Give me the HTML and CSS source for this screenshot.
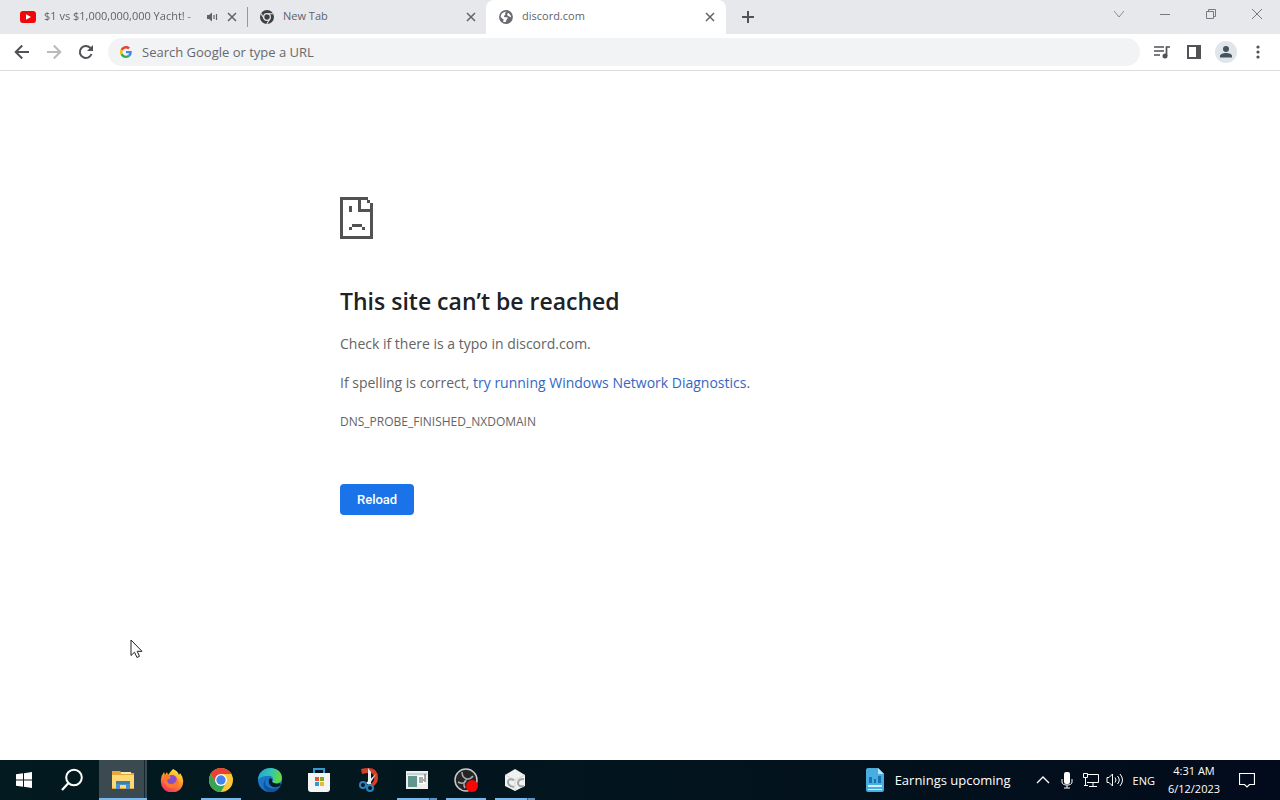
FILE: index.html
```html
<!DOCTYPE html>
<html lang="en">
<head>
<meta charset="utf-8">
<title>discord.com</title>
<link rel="stylesheet" href="styles.css">
</head>
<body>
<header class="browser">
  <div class="tabstrip">
    <div class="tab tab-first">
      <svg class="favicon" viewBox="0 0 16 16"><rect y="2" width="16" height="12" rx="3" fill="#f00808"/><path d="M6 5.2v5.6L11 8z" fill="#fff"/></svg>
      <span class="tab-title tab-title-faded">$1 vs $1,000,000,000 Yacht! -</span>
      <button class="icon-button" aria-label="Mute tab"><svg width="12" height="12" viewBox="0 0 12 12"><path d="M0 4h2L5 1.500v9L2 8H0z" fill="#5f6368"/><path d="M7 4v4M9.500 3v6" stroke="#5f6368" stroke-width="1.200"/></svg></button>
      <button class="icon-button close" aria-label="Close tab"><svg width="10" height="10" viewBox="0 0 10 10"><path d="M1 1l8 8M9 1L1 9" stroke="#5f6368" stroke-width="1.500"/></svg></button>
    </div>
    <div class="tab tab-second">
      <svg class="favicon favicon-small" viewBox="0 0 16 16"><circle cx="8" cy="8" r="8" fill="#3c4043"/><circle cx="8" cy="8" r="3.800" fill="#3c4043" stroke="#e7e8ec" stroke-width="1.400"/><path d="M8 4.200h7M4.700 9.900L1.200 3.900M11.300 9.900L7.800 16" stroke="#e7e8ec" stroke-width="1.200"/></svg>
      <span class="tab-title">New Tab</span>
      <button class="icon-button close" aria-label="Close tab"><svg width="10" height="10" viewBox="0 0 10 10"><path d="M1 1l8 8M9 1L1 9" stroke="#5f6368" stroke-width="1.500"/></svg></button>
    </div>
    <div class="tab tab-active">
      <svg class="favicon favicon-small" viewBox="0 0 16 16"><circle cx="8" cy="8" r="7.900" fill="#6a6b70"/><path d="M8.800 2Q6.500 3 7 4.500Q8 5.700 6.200 6.300Q5 7.200 6.500 8.300H9.700Q10.500 9.800 9 10.200L7.700 13.800Q5.500 14 4.300 13.100L5.600 11.400L1.900 8Q2 3 7.300 1.900zM10.200 3.200L12 4.500Q13.700 6 14 8.700L12 7.500L10.800 7.200L9.200 5.500z" fill="#fff"/></svg>
      <span class="tab-title">discord.com</span>
      <button class="icon-button close" aria-label="Close tab"><svg width="10" height="10" viewBox="0 0 10 10"><path d="M1 1l8 8M9 1L1 9" stroke="#5f6368" stroke-width="1.500"/></svg></button>
    </div>
    <button class="icon-button new-tab" aria-label="New tab"><svg width="14" height="14" viewBox="0 0 14 14"><path d="M7 1v12M1 7h12" stroke="#505358" stroke-width="2"/></svg></button>
    <div class="window-controls">
      <button class="icon-button" aria-label="Search tabs"><svg width="12" height="12" viewBox="0 0 12 12"><path d="M1 3l5 6 5-6" fill="none" stroke="#8b8d94"/></svg></button>
      <button class="icon-button" aria-label="Minimize"><svg width="12" height="12" viewBox="0 0 12 12"><path d="M1 6.500h10" stroke="#777980"/></svg></button>
      <button class="icon-button" aria-label="Restore"><svg width="12" height="12" viewBox="0 0 12 12"><path d="M1.500 3.500h7v7h-7zM3.500 3.500v-2h7v7h-2" fill="none" stroke="#777980"/></svg></button>
      <button class="icon-button" aria-label="Close window"><svg width="12" height="12" viewBox="0 0 12 12"><path d="M1 1l10 10M11 1L1 11" stroke="#777980"/></svg></button>
    </div>
  </div>
  <div class="toolbar">
    <button class="icon-button nav-button" aria-label="Back"><svg width="16" height="16" viewBox="0 0 16 16"><path d="M15 8H2M8.200 1.500L1.700 8l6.500 6.500" fill="none" stroke="#505256" stroke-width="2"/></svg></button>
    <button class="icon-button nav-button" aria-label="Forward"><svg width="16" height="16" viewBox="0 0 16 16"><path d="M1 8h13M7.800 1.500L14.300 8l-6.500 6.500" fill="none" stroke="#b8babd" stroke-width="2"/></svg></button>
    <button class="icon-button nav-button" aria-label="Reload page"><svg width="16" height="16" viewBox="0 0 16 16"><path d="M13.500 10A6 6 0 1 1 12.200 3.800L14 5.600" fill="none" stroke="#505256" stroke-width="2"/><path d="M15 1v6H9z" fill="#505256"/></svg></button>
    <label class="omnibox">
      <svg width="12" height="12" viewBox="0 0 48 48"><path fill="#ea4335" d="M24 9.500c3.500 0 6.700 1.200 9.200 3.600l6.900-6.900C35.900 2.400 30.500 0 24 0 14.600 0 6.500 5.400 2.600 13.200l8 6.200C12.400 13.700 17.700 9.500 24 9.500z"/><path fill="#4285f4" d="M47 24.500c0-1.600-.2-3.100-.4-4.500H24v9h12.900c-.6 3-2.300 5.500-4.800 7.200l7.700 6C44.400 38 47 31.800 47 24.500z"/><path fill="#fbbc05" d="M10.500 28.600A15 15 0 0 1 10.500 19.400l-8-6.200a24 24 0 0 0 0 21.600z"/><path fill="#34a853" d="M24 48c6.500 0 11.900-2.100 15.900-5.800l-7.700-6c-2.200 1.500-4.900 2.300-8.200 2.300-6.300 0-11.600-4.200-13.500-9.900l-8 6.200C6.500 42.600 14.600 48 24 48z"/></svg>
      <input type="text" aria-label="Address and search bar" placeholder="Search Google or type a URL">
    </label>
    <div class="actions">
      <button class="icon-button" aria-label="Media controls"><svg width="18" height="16" viewBox="0 0 18 16"><path d="M1 3h10M1 7h10M1 11h6M13.500 12V3H17" fill="none" stroke="#505256" stroke-width="1.700"/><circle cx="12" cy="12" r="2.500" fill="#505256"/></svg></button>
      <button class="icon-button" aria-label="Side panel"><svg width="14" height="14" viewBox="0 0 14 14"><path d="M0 0h14v14H0zM2 2v10h7V2z" fill="#505256" fill-rule="evenodd"/></svg></button>
      <button class="icon-button" aria-label="Profile"><svg width="22" height="22" viewBox="0 0 22 22"><circle cx="11" cy="11" r="11" fill="#dfe5e9"/><circle cx="11" cy="8" r="3" fill="#455260"/><path d="M5 16.500v-1.500c0-2 3-3 6-3s6 1 6 3v1.500z" fill="#455260"/></svg></button>
      <button class="icon-button" aria-label="Browser menu"><svg width="4" height="14" viewBox="0 0 4 14"><g fill="#505256"><circle cx="2" cy="2" r="1.600"/><circle cx="2" cy="7" r="1.600"/><circle cx="2" cy="12" r="1.600"/></g></svg></button>
    </div>
  </div>
</header>

<main class="page">
  <section class="error">
    <svg class="sad-page" width="34" height="42" viewBox="0 0 34 42" shape-rendering="crispEdges"><path d="M0 0h28v3H3v36h27V15H18V0h3v12h9V6h3v36H0zM27 3h3v3h-3zM9 9h3v6H9zM12 27h10v3H12zM9 30h3v3H9zM22 30h3v3h-3z" fill="#525252"/></svg>
    <h1>This site can’t be reached</h1>
    <p>Check if there is a typo in discord.com.</p>
    <p>If spelling is correct, <a href="#diagnostics">try running Windows Network Diagnostics</a>.</p>
    <p class="error-code">DNS_PROBE_FINISHED_NXDOMAIN</p>
    <button class="reload">Reload</button>
  </section>
  <svg class="cursor" width="13" height="20" viewBox="0 0 13 20"><path d="M1 1v15.500l3.500-3.300L7 18.500l2.500-1.200-2.300-5H12z" fill="#fff" stroke="#222"/></svg>
</main>

<footer class="taskbar">
  <button class="task" aria-label="Start"><svg width="16" height="16" viewBox="0 0 16 16"><path d="M0 2.300L7 1.300V7.500H0zM8 1.200L16 0v7.500H8zM0 8.500h7v6.200l-7-1zM8 8.500h8V16l-8-1.200z" fill="#fff"/></svg></button>
  <button class="task" aria-label="Search"><svg width="24" height="24" viewBox="0 0 24 24"><circle cx="14" cy="9.500" r="7.800" fill="none" stroke="#fff" stroke-width="2"/><path d="M8.500 15L2 22" stroke="#fff" stroke-width="2.200"/></svg></button>
  <div class="apps">
    <button class="task task-current" aria-label="File Explorer"><svg width="24" height="24" viewBox="0 0 24 24"><path d="M1 3h8l2 2h12v16H1z" fill="#e5a83b"/><path d="M1 7h22v13H1z" fill="#ffda72"/><path d="M10 4h10v2H10z" fill="#f6e7b4"/><path d="M5 21v-8h14v8h-4v-4H9v4z" fill="#4593cc"/><path d="M5 13h14v3H5z" fill="#3e80ad"/></svg></button>
    <button class="task" aria-label="Firefox"><svg width="24" height="24" viewBox="0 0 24 24"><defs><linearGradient id="fox" x1=".8" y1="0" x2=".3" y2="1"><stop stop-color="#fff044"/><stop offset=".45" stop-color="#ff9a28"/><stop offset="1" stop-color="#f22c62"/></linearGradient></defs><path d="M13 1q5 2 6 6l1-2q4 5 3 10a11 10 0 0 1-22-1Q0 9 4 4l1 3 2-3 1 3q3-4 5-6z" fill="url(#fox)"/><circle cx="12" cy="12" r="5" fill="#8750c7"/><path d="M4 7q5-1 7 3l-4 2q0 4 4 4 5 0 6-6l2 5q-3 6-9 5-7-2-6-13z" fill="#ff762f"/></svg></button>
    <button class="task task-running" aria-label="Chrome"><svg width="24" height="24" viewBox="0 0 24 24"><circle cx="12" cy="12" r="12" fill="#fbc83c"/><path d="M1.600 6A12 12 0 0 1 22.400 6H12L6.800 15z" fill="#e64335"/><path d="M1.600 6L7 15h5.200L17 15l-5.200 9A12 12 0 0 1 1.600 6z" fill="#35a553"/><circle cx="12" cy="12" r="6" fill="#fff"/><circle cx="12" cy="12" r="4.700" fill="#4284ed"/></svg></button>
    <button class="task" aria-label="Edge"><svg width="24" height="24" viewBox="0 0 24 24"><defs><linearGradient id="edge" x1="0" y1="0" x2="1" y2=".3"><stop stop-color="#239cdb"/><stop offset=".55" stop-color="#32c4b4"/><stop offset="1" stop-color="#62d747"/></linearGradient></defs><circle cx="12" cy="12" r="12" fill="#1877c8"/><path d="M0 12C1-4 24-3 24 10c0 5-6 7-10 4 3-3 0-7-5-6C5 8 1 10 0 12z" fill="url(#edge)"/><path d="M9 9q-5 8 3 11 5 2 10-1-4 6-11 5Q1 19 9 9z" fill="#13529b"/><path d="M14 14q4 3 8 1l1 2q-5 4-10 1-4-4-1-8 3 1 2 4z" fill="#061e28"/></svg></button>
    <button class="task" aria-label="Microsoft Store"><svg width="24" height="24" viewBox="0 0 24 24"><path d="M7 7V1h10v6" fill="none" stroke="#3799d4" stroke-width="2"/><path d="M1 5h22v16q0 3-3 3H4q-3 0-3-3z" fill="#f3f4f4"/><path d="M8 9h4v4H8z" fill="#e8572e"/><path d="M13 9h4v4h-4z" fill="#77ad29"/><path d="M8 14h4v4H8z" fill="#299dd5"/><path d="M13 14h4v4h-4z" fill="#f4b62d"/></svg></button>
    <button class="task" aria-label="Snipping Tool"><svg width="24" height="24" viewBox="0 0 24 24"><path d="M5 1q17-4 17 9 0 6-6 9l-2-3q5-2 4-7-1-5-7-4l-5 1z" fill="#d43f25"/><path d="M12 0l3 4v12h-3zM20 6l-7 11-3-2z" fill="#e8edf0"/><g fill="none" stroke="#2d83bd" stroke-width="2"><circle cx="7" cy="17" r="3"/><circle cx="14" cy="20" r="3"/></g></svg></button>
    <button class="task task-stacked" aria-label="Recorder"><svg width="24" height="24" viewBox="0 0 24 24"><path d="M1 3h22v18H1z" fill="#eee"/><path d="M2 5h20v2H2z" fill="#c5d2d3"/><path d="M3 8h9v11H3z" fill="#629790"/><path d="M13 8h7v8h-7z" fill="#fff"/><path d="M14 10h4M14 12h5M14 14h4M20 6v8" stroke="#53595a"/></svg></button>
    <button class="task task-running" aria-label="OBS Studio"><svg width="24" height="24" viewBox="0 0 24 24"><circle cx="12" cy="12" r="11" fill="#252527" stroke="#c8c9ca" stroke-width="1.500"/><path d="M8 4q0 6 5 7 4 0 6-3M13 11q-5 4-2 9M4 14q5 3 8-1" fill="none" stroke="#a9aaab" stroke-width="1.500"/><circle cx="18" cy="18" r="6" fill="#f90706"/></svg></button>
    <button class="task task-stacked" aria-label="Cube app"><svg width="24" height="24" viewBox="0 0 24 24"><path d="M12 1l10 6v11l-10 5-10-5V7z" fill="#f0f1f1"/><path d="M2 7l10 5 10-5M12 12v11" fill="none" stroke="#d4d6d7"/><path d="M11 12q-6-2-6 2t6 5M21 11q-6 0-6 4t6 3" fill="none" stroke="#a4a7a9" stroke-width="2"/></svg></button>
  </div>
  <button class="news"><svg width="20" height="24" viewBox="0 0 20 24"><path d="M1 2q0-2 2-2h10l6 6v16q0 2-2 2H3q-2 0-2-2z" fill="#48addf"/><path d="M13 0l6 6h-6z" fill="#b5e7fb"/><path d="M4 9h3v6H4zM9 11h2v4H9zM13 8h3v7h-3z" fill="#1973b2"/><path d="M3 17h14v2H3zM3 21h14v1H3z" fill="#caf1ff"/></svg><span>Earnings upcoming</span></button>
  <div class="tray">
    <button class="icon-button" aria-label="Show hidden icons"><svg width="14" height="10" viewBox="0 0 14 10"><path d="M1 8l6-6 6 6" fill="none" stroke="#fff" stroke-width="1.400"/></svg></button>
    <button class="icon-button" aria-label="Microphone"><svg width="12" height="18" viewBox="0 0 12 18"><rect x="3" y="1" width="6" height="12" rx="2" fill="#fff"/><path d="M1 8v3q0 3 5 3t5-3V8M6 14v3M3 17h6" fill="none" stroke="#fff"/></svg></button>
    <button class="icon-button" aria-label="Network"><svg width="16" height="14" viewBox="0 0 16 14"><path d="M5 1.500h10.500v8H4M.5.500h4v4h-4zM2.500 4v8.500M1 12.500h4M10 10v3M6 13.500h8" fill="none" stroke="#fff"/></svg></button>
    <button class="icon-button" aria-label="Volume"><svg width="18" height="14" viewBox="0 0 18 14"><path d="M1 4.500h2L6.500 1v12L3 9.500H1zM9 4.500q2 2.500 0 5M11.500 3q3.500 4 0 8M14 1q5 6 0 12" fill="none" stroke="#fff"/></svg></button>
    <button class="language">ENG</button>
    <button class="clock"><span>4:31 AM</span><span>6/12/2023</span></button>
    <button class="icon-button notifications" aria-label="Notifications"><svg width="16" height="16" viewBox="0 0 16 16"><path d="M.5 1.500h15v11h-5L8 15l-2.500-2.500h-5z" fill="none" stroke="#fff" stroke-width="1.200"/></svg></button>
  </div>
</footer>
</body>
</html>
```

FILE: styles.css
```css
* { box-sizing: border-box; }

body {
  margin: 0;
  min-height: 100vh;
  display: flex;
  flex-direction: column;
  background: #fff;
  font-family: "Open Sans", "Noto Sans", sans-serif;
}

svg { display: block; flex: none; }

button {
  margin: 0;
  padding: 0;
  border: 0;
  background: none;
  color: inherit;
  font: inherit;
}

.icon-button {
  display: grid;
  place-items: center;
  flex: none;
}

/* Tab strip */
.tabstrip {
  display: flex;
  height: 34px;
  background: #e7e8ec;
}

.tab {
  display: flex;
  align-items: center;
  gap: 8px;
  flex: 0 1 240px;
  min-width: 0;
  color: #5f6368;
  font-size: 11px;
}

.tab-first {
  flex-basis: 248px;
  padding: 0 10px 0 20px;
  border-right: 1px solid transparent;
  border-image: linear-gradient(transparent 8px, #96989d 8px, #96989d 26px, transparent 26px) 1;
}

.tab-second { flex-basis: 238px; padding: 0 10px 0 12px; }

.tab-active {
  padding: 0 11px 0 13px;
  border-radius: 8px 8px 0 0;
  background: #fff;
}

.favicon { width: 16px; height: 16px; }
.favicon-small { width: 14px; height: 14px; margin-right: 1px; }

.tab-title {
  flex: 1;
  min-width: 0;
  overflow: hidden;
  line-height: 16px;
  padding-bottom: 2px;
  white-space: nowrap;
}

.tab-title-faded { mask-image: linear-gradient(to right, #000 92%, transparent); }

.new-tab { width: 44px; }

.window-controls {
  display: flex;
  height: 28px;
  margin-left: auto;
}

.window-controls .icon-button { width: 46px; }

/* Toolbar */
.toolbar {
  display: flex;
  align-items: center;
  height: 37px;
  padding: 0 10px 0 6px;
  border-bottom: 1px solid #dcdde0;
}

.nav-button { width: 32px; height: 32px; }

.omnibox {
  display: flex;
  align-items: center;
  gap: 10px;
  flex: 1;
  height: 28px;
  margin-left: 6px;
  padding: 0 18px 0 12px;
  border-radius: 14px;
  background: #f2f3f5;
}

.omnibox input {
  flex: 1;
  min-width: 0;
  padding: 0;
  border: 0;
  outline: 0;
  background: none;
  font: 13px "Open Sans", "Noto Sans", sans-serif;
}

.omnibox input::placeholder { color: #66696e; opacity: 1; }

.actions { display: flex; margin-left: 6px; }
.actions .icon-button { width: 32px; height: 32px; }
.actions .icon-button:last-child { margin-right: -4px; }

/* Error page */
.page {
  position: relative;
  flex: 1;
  padding: 126px 24px 0;
}

.error {
  max-width: 600px;
  margin: 0 auto;
  color: #646464;
  font-size: 14px;
  line-height: 23px;
}

.error h1 {
  margin: 45px 0 14px;
  color: #202124;
  font-size: 23px;
  font-weight: 600;
  line-height: 34px;
}

.error p { margin: 0 0 16px; }
.error a { color: #3367c4; text-decoration: none; }
.error .error-code { font-size: 12px; }

.reload {
  margin-top: 35px;
  padding: 0 17px;
  border-radius: 4px;
  background: #1a73e8;
  color: #fff;
  font: 500 13px/31px Roboto, sans-serif;
}

.cursor {
  position: absolute;
  left: 130px;
  top: 568px;
}

/* Taskbar */
.taskbar {
  display: flex;
  height: 40px;
  background: linear-gradient(to right, #021a20, #03131d 60%, #020b1b);
  color: #fff;
}

.task {
  display: grid;
  place-items: center;
  width: 48px;
  height: 40px;
}

.apps { display: flex; gap: 1px; margin-left: 3px; }

.task-current {
  background:
    linear-gradient(#79b8ed, #79b8ed) bottom / 100% 2px no-repeat,
    linear-gradient(to right, transparent 45px, #17282e 45px, #17282e 46px, transparent 46px),
    #3a4a50;
}

.task-running { background: linear-gradient(#79b8ed, #79b8ed) bottom / 40px 2px no-repeat; }

.task-stacked {
  background: linear-gradient(to right, transparent 4px, #79b8ed 4px, #79b8ed 36px, #355d7a 36px, #355d7a 37px, #5d94c0 37px, #5d94c0 44px, transparent 44px) bottom / 100% 2px no-repeat;
}

.news {
  display: flex;
  align-items: center;
  gap: 10px;
  margin-left: auto;
  font-size: 13px;
  white-space: nowrap;
}

.tray {
  display: flex;
  align-items: center;
  margin-left: 20px;
  font-size: 11px;
}

.tray .icon-button { width: 24px; height: 40px; }
.language { margin: 0 1px 0 6px; }

.clock {
  display: grid;
  width: 76px;
  line-height: 18px;
  text-align: center;
}

.tray .notifications { width: 30px; margin-right: 18px; }
```
